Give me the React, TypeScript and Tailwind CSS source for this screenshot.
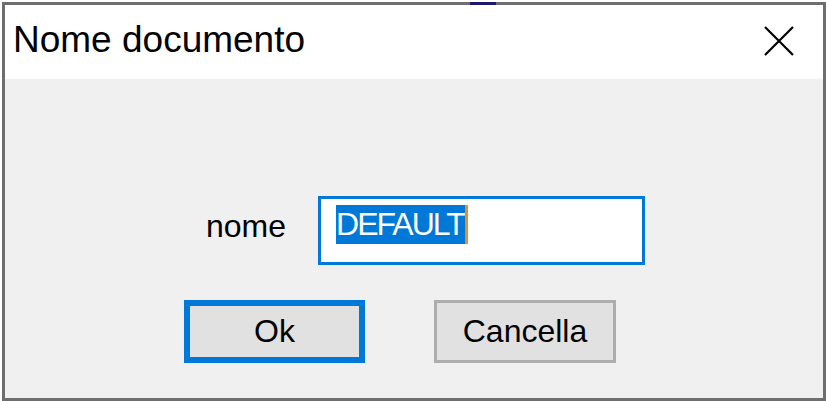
import { useState } from 'react';

const font = { fontFamily: '"Liberation Sans", Arial, sans-serif' };

function CloseIcon() {
    return (
        <svg width={30} height={30} viewBox="0 0 30 30" className="block">
            <path d="M1 1 L29 29 M29 1 L1 29" stroke="#000" strokeWidth={2.2} fill="none" />
        </svg>
    );
}

function DialogButton({ label, focused }: { label: string; focused?: boolean }) {
    return (
        <button
            type="button"
            className={`flex h-[63px] items-center justify-center bg-[#e1e1e1] text-[32px] leading-[37px] text-black ${
                focused ? 'w-[181px] border-[6px] border-[#0078d7]' : 'w-[182px] border-[3px] border-[#adadad]'
            }`}
        >
            {label}
        </button>
    );
}

export default function App() {
    const [name] = useState('DEFAULT');

    return (
        <div className="relative h-[401px] w-[826px] bg-white pl-[2px] pt-[2px]" style={font}>
            <span className="absolute left-[470px] top-[2px] h-[3px] w-[26px] bg-[#1a1a70]" />
            <div className="flex h-full w-full flex-col border-[3px] border-[#6e6e6e]">
                {/* title bar */}
                <div className="flex h-[74px] shrink-0 items-start justify-between bg-white">
                    <span className="pl-[8px] pt-[14px] text-[37px] leading-[42px] text-black">Nome documento</span>
                    <span className="mr-[29px] mt-[21px]">
                        <CloseIcon />
                    </span>
                </div>

                {/* body */}
                <div className="flex flex-1 flex-col bg-[#f0f0f0]">
                    <div className="ml-[201px] mt-[117px] flex items-start">
                        <span className="mt-[11px] text-[32px] leading-[39px] text-black">nome</span>
                        <div className="ml-[32px] h-[69px] w-[327px] border-[3px] border-[#0078d7] bg-white pl-[15px] pt-[6px]">
                            <span className="relative inline-block bg-[#0078d7] pr-[1px] text-[32px] leading-[39px] tracking-[-2px] text-white">
                                {name}
                                <span className="absolute -right-[3px] top-0 h-full w-[3px] bg-[#f08a24]" />
                            </span>
                        </div>
                    </div>

                    <div className="ml-[179px] mt-[35px] flex gap-[69px]">
                        <DialogButton label="Ok" focused />
                        <DialogButton label="Cancella" />
                    </div>
                </div>
            </div>
        </div>
    );
}
